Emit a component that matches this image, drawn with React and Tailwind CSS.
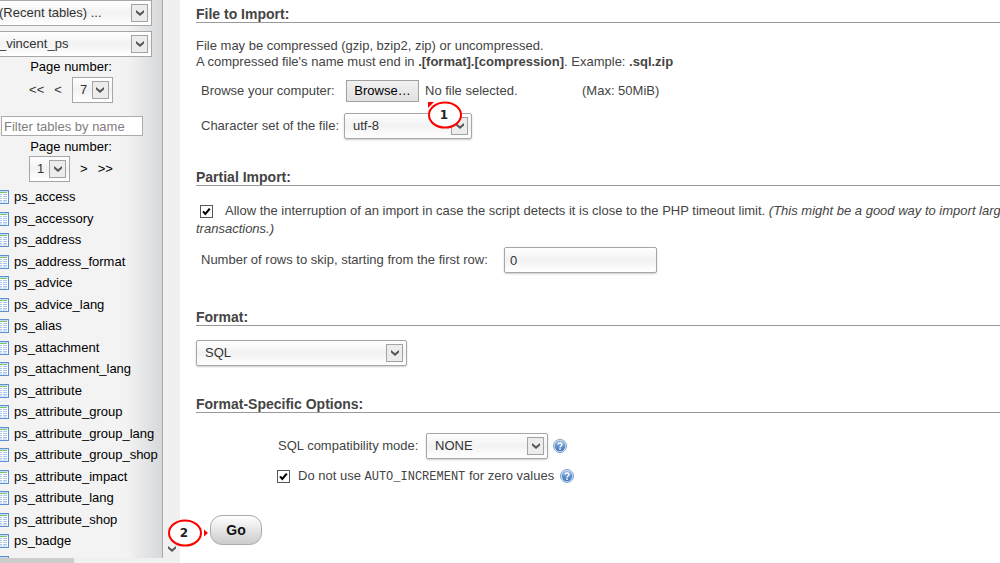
import React, { useRef } from "react";

const tables = [
  "ps_access",
  "ps_accessory",
  "ps_address",
  "ps_address_format",
  "ps_advice",
  "ps_advice_lang",
  "ps_alias",
  "ps_attachment",
  "ps_attachment_lang",
  "ps_attribute",
  "ps_attribute_group",
  "ps_attribute_group_lang",
  "ps_attribute_group_shop",
  "ps_attribute_impact",
  "ps_attribute_lang",
  "ps_attribute_shop",
  "ps_badge",
  "ps_badge_lang",
];

function Chevron({ className = "" }) {
  return (
    <svg viewBox="0 0 8 6" className={`h-[6px] w-[8px] ${className}`} aria-hidden="true">
      <path d="M0 0 L4 3.2 L8 0 V2.6 L4 6 L0 2.6 Z" fill="#555" />
    </svg>
  );
}

/* Drop-down with a boxed arrow at its right edge. */
function Select({ id, label, options, className = "", selectClass = "" }) {
  return (
    <span className={`relative inline-flex h-[26px] ${className}`}>
      <select
        id={id}
        aria-label={label}
        className={`h-full w-full appearance-none border border-[#a6a6a6] bg-linear-to-b from-white via-[#f2f2f2] to-white pr-6 text-[13px] ${selectClass}`}
      >
        {options.map((o) => (
          <option key={o}>{o}</option>
        ))}
      </select>
      <span className="pointer-events-none absolute top-1 right-1 flex h-[18px] w-[17px] items-center justify-center border border-[#a3a3a3] bg-[#ececec]">
        <Chevron />
      </span>
    </span>
  );
}

function TableIcon() {
  return (
    <svg viewBox="0 0 17 14" className="h-[14px] w-[17px] shrink-0" aria-hidden="true">
      <rect x="0.5" y="0.5" width="16" height="13" fill="#fff" stroke="#5b8fd6" />
      <rect x="1" y="1" width="15" height="1" fill="#c6dbf5" />
      <rect x="2" y="2" width="13" height="1" fill="#7fc66b" />
      <path d="M2 4.5H15M2 6.5H15M2 8.5H15M2 10.5H15M2 12H15" stroke="#a9c6ee" />
      <path d="M6.5 4V12.5M10.5 4V12.5" stroke="#fff" />
    </svg>
  );
}

function HelpIcon() {
  return (
    <a href="#help" aria-label="Documentation">
      <svg viewBox="0 0 14 14" className="h-[14px] w-[14px]" aria-hidden="true">
        <defs>
          <linearGradient id="help" x1="0" y1="0" x2="0" y2="1">
            <stop offset="0" stopColor="#8fb8e4" />
            <stop offset="1" stopColor="#3a72b8" />
          </linearGradient>
        </defs>
        <circle cx="7" cy="7" r="6.5" fill="#dbe7f5" stroke="#7d9fca" />
        <circle cx="7" cy="7" r="5.3" fill="url(#help)" />
        <path d="M5 5.6C5 3.3 9 3.3 9 5.6C9 7 7 7 7 8.4" fill="none" stroke="#fff" strokeWidth="1.5" />
        <rect x="6.2" y="9.4" width="1.6" height="1.5" fill="#fff" />
      </svg>
    </a>
  );
}

function Checkbox({ id, label }) {
  return (
    <span className="relative inline-flex h-[13px] w-[13px] shrink-0">
      <input
        id={id}
        type="checkbox"
        defaultChecked
        aria-label={label}
        className="peer h-[13px] w-[13px] appearance-none border border-[#555] bg-white"
      />
      <svg
        viewBox="0 0 13 13"
        className="pointer-events-none absolute inset-0 hidden h-[13px] w-[13px] peer-checked:block"
        aria-hidden="true"
      >
        <path d="M3 6.4L5.3 9L9.8 3.6" fill="none" stroke="#000" strokeWidth="2.1" />
      </svg>
    </span>
  );
}

function Callout({ number, className = "", children }) {
  return (
    <span className={`pointer-events-none absolute h-[28px] w-[41px] ${className}`}>
      <svg viewBox="0 0 41 28" className="absolute inset-0 h-[28px] w-[41px]" aria-hidden="true">
        {children}
        <ellipse cx="17" cy="14" rx="16" ry="12.6" fill="#fff" stroke="#f00" strokeWidth="2" />
      </svg>
      <span className="relative flex h-[28px] w-8 items-center justify-center font-['DejaVu_Sans'] text-[12px] font-bold text-[#222]">
        {number}
      </span>
    </span>
  );
}

function Section({ title, className = "", children }) {
  return (
    <section className={className}>
      <h2 className="border-b border-[#999] text-[14px] leading-4 font-bold">{title}</h2>
      {children}
    </section>
  );
}

const field = "rounded-xs px-2 text-[#333] shadow-[0_1px_2px_rgba(0,0,0,0.2)]";

export default function App() {
  const fileRef = useRef(null);
  return (
    <div className="flex h-screen overflow-hidden bg-white font-['Liberation_Sans',Arial,sans-serif] text-[13px] text-[#444]">
      <aside className="flex w-[180px] shrink-0 flex-col bg-[#f0f0f0] text-black">
        <div className="flex min-h-0 flex-1">
          <div className="w-[163px] overflow-hidden border-r border-[#a8a8a8] bg-linear-to-r from-[#f3f3f3] from-78% to-[#d6d8da]">
            <div className="-ml-2 flex flex-col">
              <Select
                label="Recent tables"
                options={["(Recent tables) ..."]}
                className="w-[160px]"
                selectClass="pl-[6px] text-[#333]"
              />
              <Select
                label="Database"
                options={["_vincent_ps"]}
                className="mt-[5px] w-[160px]"
                selectClass="pl-[6px] text-[#333]"
              />
              <div className="flex w-[158px] flex-col items-center">
                <label htmlFor="dbpage" className="mt-[1px] leading-[18px]">
                  Page number:
                </label>
                <div className="mt-[1px] flex items-center gap-[10px] text-[#333]">
                  <a href="#first">&lt;&lt;</a>
                  <a href="#prev">&lt;</a>
                  <Select id="dbpage" options={["7"]} className="w-[41px]" selectClass="pl-[7px]" />
                </div>
              </div>
              <input
                type="text"
                aria-label="Filter tables by name"
                placeholder="Filter tables by name"
                className="mt-[13px] ml-[9px] h-5 w-[142px] border border-[#ababab] bg-white px-[2px] text-[13px] placeholder:text-[#808080]"
              />
              <div className="flex w-[158px] flex-col items-center">
                <label htmlFor="tablepage" className="mt-[2px] leading-[18px]">
                  Page number:
                </label>
                <div className="flex items-center gap-[10px]">
                  <Select
                    id="tablepage"
                    options={["1"]}
                    className="w-[41px]"
                    selectClass="pl-[7px] text-[#333]"
                  />
                  <a href="#next">&gt;</a>
                  <a href="#last">&gt;&gt;</a>
                </div>
              </div>
              <ul className="mt-1">
                {tables.map((t) => (
                  <li key={t} className="flex items-center gap-[5px] odd:h-[22px] even:h-[21px]">
                    <TableIcon />
                    <a href={`#${t}`}>{t}</a>
                  </li>
                ))}
              </ul>
            </div>
          </div>
          <div className="flex flex-1 flex-col items-center justify-end pb-[6px]">
            <Chevron />
          </div>
        </div>
        <div className="h-[5px] shrink-0">
          <div className="h-full w-[74px] bg-[#cdcdcd]" />
        </div>
      </aside>

      <main className="min-w-0 flex-1 pt-[6px] pl-4">
        <Section title="File to Import:">
          <p className="mt-[15px] leading-4">
            File may be compressed (gzip, bzip2, zip) or uncompressed.
            <br />A compressed file's name must end in <b>.[format].[compression]</b>. Example:{" "}
            <b>.sql.zip</b>
          </p>
          <div className="mt-[10px] flex items-center pl-[5px]">
            <label htmlFor="file" className="w-[145px]">
              Browse your computer:
            </label>
            <input ref={fileRef} id="file" type="file" className="hidden" />
            <button
              type="button"
              onClick={() => fileRef.current.click()}
              className="h-[22px] w-[73px] border border-[#a0a0a0] bg-linear-to-b from-[#f0f0f0] to-[#e2e2e2] text-black"
            >
              Browse…
            </button>
            <span className="ml-[6px] w-[157px]">No file selected.</span>
            <span>(Max: 50MiB)</span>
          </div>
          <div className="mt-[11px] flex items-center pl-[5px]">
            <label htmlFor="charset" className="w-[143px]">
              Character set of the file:
            </label>
            <span className="relative flex">
              <Select id="charset" options={["utf-8"]} className="w-[128px]" selectClass={field} />
              <Callout number="1" className="-top-3 left-[84px]">
                <path d="M0 1H6L0 7Z" fill="#f00" />
              </Callout>
            </span>
          </div>
        </Section>

        <Section title="Partial Import:" className="mt-[30px]">
          <div className="mt-4 leading-[18px] whitespace-nowrap">
            <span className="flex items-center pl-1">
              <Checkbox id="interrupt" />
              <label htmlFor="interrupt" className="ml-3">
                Allow the interruption of an import in case the script detects it is close to the PHP
                timeout limit. <i>(This might be a good way to import large files, however it can break</i>
              </label>
            </span>
            <i>transactions.)</i>
          </div>
          <div className="mt-[9px] flex items-center pl-[5px]">
            <label htmlFor="skip" className="w-[303px]">
              Number of rows to skip, starting from the first row:
            </label>
            <input
              id="skip"
              type="text"
              defaultValue="0"
              className="h-[26px] w-[153px] rounded-xs border border-[#a6a6a6] bg-linear-to-b from-white via-[#f2f2f2] to-white px-[5px] text-[13px] text-[#333] shadow-[0_1px_2px_rgba(0,0,0,0.2)]"
            />
          </div>
        </Section>

        <Section title="Format:" className="mt-9">
          <div className="mt-[14px] flex">
            <Select label="Format" options={["SQL"]} className="w-[211px]" selectClass={field} />
          </div>
        </Section>

        <Section title="Format-Specific Options:" className="mt-[30px]">
          <div className="mt-5 flex items-center pl-[82px]">
            <label htmlFor="compat" className="w-[148px]">
              SQL compatibility mode:
            </label>
            <Select id="compat" options={["NONE"]} className="mr-[5px] w-[122px]" selectClass={field} />
            <HelpIcon />
          </div>
          <div className="mt-2 flex h-[18px] items-center pl-[81px]">
            <Checkbox id="autoinc" />
            <label htmlFor="autoinc" className="mr-[6px] ml-2">
              Do not use{" "}
              <code className="font-['Liberation_Mono'] text-[12px]">AUTO_INCREMENT</code> for zero
              values
            </label>
            <HelpIcon />
          </div>
        </Section>

        <div className="relative mt-[30px] flex pl-[14px]">
          <Callout number="2" className="top-1 -left-7">
            <path d="M36 10.5L40 14L36 17.5Z" fill="#f00" />
          </Callout>
          <button
            type="submit"
            className="h-[30px] w-[52px] rounded-[12px] border border-[#aaa] bg-linear-to-b from-white to-[#ccc] text-[14px] font-bold text-[#111]"
          >
            Go
          </button>
        </div>
      </main>
    </div>
  );
}
